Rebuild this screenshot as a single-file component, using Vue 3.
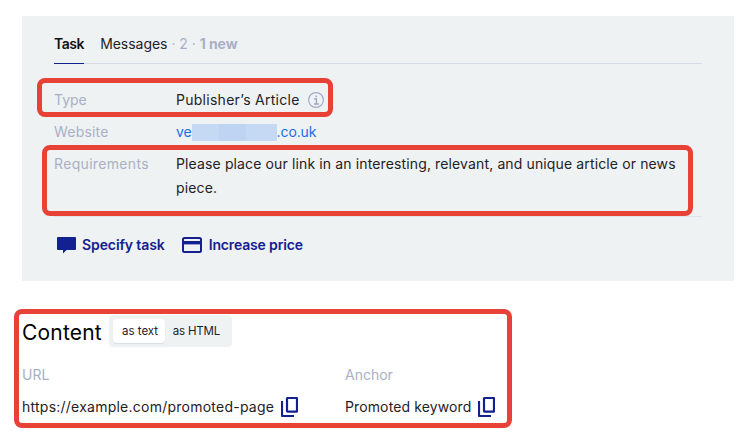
<script setup>
const rows = [
  { label: 'Type', key: 'type' },
  { label: 'Website', key: 'site' },
  { label: 'Requirements', key: 'req' },
]
</script>

<template>
  <div class="page">
    <section class="panel">
      <nav class="tabs">
        <span class="tab active">Task</span>
        <span class="tab">Messages<span class="muted"> · 2 · </span><b class="muted">1 new</b></span>
      </nav>
      <div class="rows">
        <div v-for="row in rows" :key="row.key" class="row">
          <div class="label" :class="row.key">{{ row.label }}</div>
          <div v-if="row.key === 'type'" class="value with-icon">
            <span class="pub">Publisher’s Article</span>
            <svg class="info" width="16" height="16" viewBox="0 0 16 16" fill="none">
              <circle cx="8" cy="8" r="7.4" stroke="#a3abc8" stroke-width="1.2" />
              <path d="M8.2 3.4v1.8M6.2 7h2.2v4.8M6 12h4.8" stroke="#9aa2c2" stroke-width="1.3" />
            </svg>
          </div>
          <div v-else-if="row.key === 'site'" class="value link">ve<span class="blur"></span>.co.uk</div>
          <div v-else class="value body">Please place our link in an interesting, relevant, and unique article or news piece.</div>
        </div>
      </div>
      <div class="actions">
        <a class="action">
          <svg width="19" height="17" viewBox="0 0 19 17"><path d="M1 0h17a1 1 0 0 1 1 1v11a1 1 0 0 1-1 1H9.5L6 16.6V13H1a1 1 0 0 1-1-1V1a1 1 0 0 1 1-1z" fill="#13208f" /></svg>
          Specify task
        </a>
        <a class="action second">
          <svg width="20" height="16" viewBox="0 0 20 16" fill="none"><rect x="1" y="1" width="18" height="14" rx="1.5" stroke="#13208f" stroke-width="2" /><rect x="1" y="4" width="18" height="3.4" fill="#13208f" /></svg>
          Increase price
        </a>
      </div>
    </section>

    <section class="content">
      <div class="head">
        <h2>Content</h2>
        <div class="seg">
          <span class="seg-item on">as text</span>
          <span class="seg-item html">as HTML</span>
        </div>
      </div>
      <div class="fields">
        <div class="field url">
          <div class="label">URL</div>
          <div class="copy"><span class="url-text">https://example.com/promoted-page</span>
            <svg width="17" height="20" viewBox="0 0 17 20" fill="none"><path d="M1 4v14.6a.4.4 0 0 0 .4.4H13" stroke="#13208f" stroke-width="2.2" /><rect x="6" y="1" width="10" height="13.6" rx=".6" stroke="#13208f" stroke-width="2.2" /></svg>
          </div>
        </div>
        <div class="field">
          <div class="label">Anchor</div>
          <div class="copy"><span class="anchor-text">Promoted keyword</span>
            <svg width="17" height="20" viewBox="0 0 17 20" fill="none"><path d="M1 4v14.6a.4.4 0 0 0 .4.4H13" stroke="#13208f" stroke-width="2.2" /><rect x="6" y="1" width="10" height="13.6" rx=".6" stroke="#13208f" stroke-width="2.2" /></svg>
          </div>
        </div>
      </div>
    </section>

    <i class="mark m1"></i>
    <i class="mark m2"></i>
    <i class="mark m3"></i>
  </div>
</template>

<style>
html, body { margin: 0; background: #fff; }
</style>

<style scoped>
.page {
  position: relative;
  width: 740px;
  height: 439px;
  overflow: hidden;
  padding: 16px 6px 0 22px;
  box-sizing: border-box;
  font-family: Inter, "Liberation Sans", sans-serif;
  font-size: 14px;
  color: #1f2125;
}
.panel {
  background: #eff2f3;
  height: 265px;
  padding: 16px 32px 0;
  box-sizing: border-box;
}
.tabs {
  display: flex;
  gap: 16px;
  height: 32px;
  box-sizing: border-box;
  line-height: 24px;
  border-bottom: 1px solid #d3dce6;
}
.tab { display: block; height: 32px; box-sizing: border-box; letter-spacing: -0.03px; }
.tab.active {
  font-weight: 600;
  color: #111;
  letter-spacing: -0.45px;
  border-bottom: 1px solid #13208f;
}
.muted { color: #a9b0c6; }
.rows {
  padding: 24px 0 16px;
  border-bottom: 1px solid #dfe4ea;
  display: flex;
  flex-direction: column;
  gap: 8px;
}
.row { display: grid; grid-template-columns: 122px 1fr; line-height: 24px; }
.label { color: #a9b0c6; }
.label.req { letter-spacing: 0.33px; }
.label.site { letter-spacing: 0.2px; }
.pub { letter-spacing: 0.27px; }
.body { letter-spacing: 0.13px; }
.url-text { letter-spacing: 0.24px; }
.anchor-text { letter-spacing: 0.12px; }
.with-icon { display: flex; align-items: center; gap: 8px; }
.info { flex: none; }
.link { color: #1a6ee8; letter-spacing: -0.1px; }
.blur {
  display: inline-block;
  width: 85px;
  height: 17px;
  vertical-align: -4px;
  background: linear-gradient(90deg, #c6d9f4 0 32%, #bfd3f2 32% 64%, #c6d9f4 64% 100%);
}
.actions { display: flex; gap: 17px; padding: 18px 3px 0; }
.action {
  display: flex;
  align-items: center;
  gap: 6px;
  color: #13208f;
  font-weight: 600;
  line-height: 20px;
  letter-spacing: -0.1px;
}
.action.second { gap: 7px; letter-spacing: -0.15px; }
.content { padding-top: 34px; }
.head { display: flex; align-items: center; gap: 7px; }
h2 { width: 80px; margin: 0; font-size: 21px; font-weight: 400; letter-spacing: 0.2px; color: #000; line-height: 32px; padding-top: 2px; height: 30px; white-space: nowrap; }
.seg {
  display: flex;
  width: 123px;
  box-sizing: border-box;
  background: #eff2f3;
  border-radius: 4px;
  padding: 4px;
  font-size: 11.5px;
  line-height: 24px;
}
.seg-item { padding: 0 8px; white-space: nowrap; }
.seg-item.on { width: 53px; box-sizing: border-box; padding: 0 0 0 9px; background: #fff; border-radius: 4px; box-shadow: 0 1px 1px #d8dde3; }
.seg-item.html { letter-spacing: -0.2px; }
.fields { display: flex; padding-top: 16px; }
.field.url { width: 323px; }
.field .label { line-height: 24px; }
.copy { display: flex; align-items: center; gap: 7px; margin-top: 8px; line-height: 24px; }
.mark {
  position: absolute;
  border: 5px solid #e84136;
  border-radius: 8px;
  box-sizing: border-box;
}
.m1 { left: 37px; top: 78px; width: 296px; height: 39px; }
.m2 { left: 42px; top: 145px; width: 651px; height: 71px; }
.m3 { left: 14px; top: 309px; width: 498px; height: 119px; }
</style>
